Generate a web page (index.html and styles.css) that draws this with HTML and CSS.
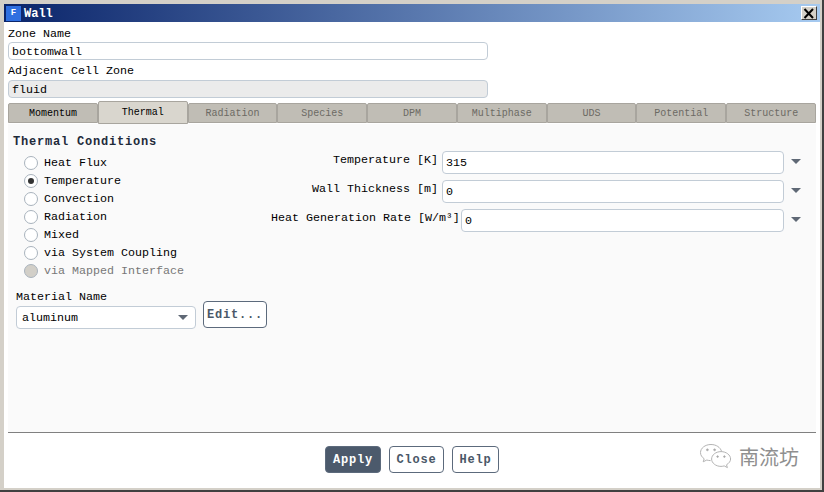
FILE: index.html
```html
<!DOCTYPE html>
<html lang="en">
  <head>
    <meta charset="UTF-8" />
    <meta name="viewport" content="width=device-width, initial-scale=1.0" />
    <title>Wall</title>
    <link rel="stylesheet" href="styles.css">
  </head>

  <body>
    <div class="window">
      <div class="window-inner">
        <div class="titlebar">
          <span class="app-icon">F</span>
          <span class="title-text">Wall</span>
          <button class="close-x">
            <svg width="12" height="11" viewBox="0 0 12 11">
              <path d="M1.5 1 L10 10 M10 1 L1.5 10" stroke="#000" stroke-width="2" fill="none" />
            </svg>
          </button>
        </div>

        <div class="zone-section">
          <label class="zone-label">Zone Name</label>
          <div class="text-box">bottomwall</div>
          <label class="zone-label adjacent">Adjacent Cell Zone</label>
          <div class="text-box readonly">fluid</div>
        </div>

        <div class="tabs">
          <div class="tab">Momentum</div>
          <div class="tab active">Thermal</div>
          <div class="tab disabled">Radiation</div>
          <div class="tab disabled">Species</div>
          <div class="tab disabled">DPM</div>
          <div class="tab disabled">Multiphase</div>
          <div class="tab disabled">UDS</div>
          <div class="tab disabled">Potential</div>
          <div class="tab disabled">Structure</div>
        </div>

        <div class="panel">
          <h2 class="panel-title">Thermal Conditions</h2>
          <div class="panel-columns">
            <div class="left-col">
              <div class="radio-list">
                <div class="radio-row"><span class="radio"></span>Heat Flux</div>
                <div class="radio-row"><span class="radio checked"></span>Temperature</div>
                <div class="radio-row"><span class="radio"></span>Convection</div>
                <div class="radio-row"><span class="radio"></span>Radiation</div>
                <div class="radio-row"><span class="radio"></span>Mixed</div>
                <div class="radio-row"><span class="radio"></span>via System Coupling</div>
                <div class="radio-row off"><span class="radio"></span>via Mapped Interface</div>
              </div>
              <div class="material-label">Material Name</div>
              <div class="material-row">
                <div class="combo">aluminum<span class="arrow"></span></div>
                <button class="btn edit-btn">Edit...</button>
              </div>
            </div>

            <div class="right-col">
              <div class="field-row">
                <span class="field-label">Temperature [K]</span>
                <div class="field-box">315</div>
                <span class="arrow"></span>
              </div>
              <div class="field-row">
                <span class="field-label">Wall Thickness [m]</span>
                <div class="field-box">0</div>
                <span class="arrow"></span>
              </div>
              <div class="field-row">
                <span class="field-label wide">Heat Generation Rate [W/m³]</span>
                <div class="field-box">0</div>
                <span class="arrow"></span>
              </div>
            </div>
          </div>
        </div>

        <div class="footer">
          <button class="btn primary apply-btn">Apply</button>
          <button class="btn close-btn">Close</button>
          <button class="btn help-btn">Help</button>
          <div class="watermark">
            <svg width="34" height="26" viewBox="0 0 34 26" fill="none" stroke="#b4b4b4" stroke-width="1">
              <path d="M12 1.5 C6 1.5 1.5 5.2 1.5 9.6 C1.5 12.2 3 14.2 5.2 15.8 L4.2 18.8 L7.8 17 C9 17.4 10.2 17.6 11.6 17.6" />
              <path d="M22.6 8.4 C21.4 4.4 17.2 1.5 12 1.5" />
              <path d="M22 8.6 C16.8 8.6 12.6 12 12.6 16 C12.6 20 16.8 23.4 22 23.4 C23.2 23.4 24.2 23.2 25.2 22.9 L28.4 24.6 L27.5 21.8 C30 20.2 31.6 18.3 31.6 16 C31.6 12 27.2 8.6 22 8.6 Z" />
              <circle cx="8.4" cy="6.8" r="0.9" fill="#999" />
              <circle cx="15.6" cy="6.8" r="0.9" fill="#999" />
              <circle cx="18.6" cy="13.6" r="0.8" fill="#999" />
              <circle cx="25.4" cy="13.6" r="0.8" fill="#999" />
            </svg>
            <span class="watermark-text">南流坊</span>
          </div>
        </div>
      </div>
    </div>
  </body>
</html>
```

FILE: styles.css
```css
* {
  box-sizing: border-box;
}

html,
body {
  margin: 0;
  padding: 0;
}

body {
  width: 824px;
  height: 492px;
  overflow: hidden;
  font-family: "Liberation Mono", "DejaVu Sans Mono", monospace;
  font-size: 11.67px;
  color: #000;
}

.window {
  width: 824px;
  height: 492px;
  background: #d4d0c8;
  border-right: 2px solid #404040;
  border-bottom: 2px solid #404040;
  padding: 4px 2px 2px 4px;
}

.window-inner {
  height: 100%;
  display: flex;
  flex-direction: column;
  background: #fff;
}

.titlebar {
  height: 18px;
  flex: none;
  display: flex;
  align-items: center;
  padding: 0 3px 0 2px;
  background: linear-gradient(to right, #0a246a, #a6caf0);
}

.app-icon {
  width: 15px;
  height: 15px;
  margin-right: 3px;
  background: #2f6fe0;
  color: #fff;
  font-size: 9px;
  font-weight: bold;
  line-height: 15px;
  text-align: center;
}

.title-text {
  flex: 1;
  padding-top: 2px;
  color: #fff;
  font-weight: bold;
  font-size: 12px;
}

.close-x {
  width: 16px;
  height: 14px;
  padding: 0;
  display: flex;
  align-items: center;
  justify-content: center;
  background: #d4d0c8;
  border: 1px solid;
  border-color: #fff #404040 #404040 #fff;
}

.zone-section {
  flex: none;
  padding: 5px 4px 0;
  width: 488px;
}

.zone-label {
  display: block;
  height: 15px;
  line-height: 14px;
}

.zone-label.adjacent {
  margin-top: 4px;
  height: 16px;
  line-height: 14px;
}

.text-box {
  height: 18px;
  line-height: 18px;
  padding-left: 3px;
  background: #fff;
  border: 1px solid #c2ccd6;
  border-radius: 4px;
}

.text-box.readonly {
  background: #ebebeb;
}

.tabs {
  flex: none;
  height: 24px;
  margin: 2px 4px 0;
  display: flex;
  align-items: flex-end;
}

.tab {
  width: 90px;
  height: 20px;
  margin-bottom: 1px;
  background: #c0bdb5;
  border: 1px solid #a8a59e;
  border-radius: 2px 2px 0 0;
  font-size: 10px;
  line-height: 20px;
  text-align: center;
}

.tab.active {
  height: 23px;
  margin-bottom: 0;
  background: #d9d6ce;
  line-height: 22px;
}

.tab.disabled {
  color: #6c6a64;
}

.panel {
  flex: 1;
  margin: 0 4px;
  padding: 11px 5px 0;
  background: #fafafa;
  border-bottom: 1px solid #808080;
}

.panel-title {
  margin: 0;
  font-size: 12px;
  font-weight: bold;
  letter-spacing: 0.8px;
  line-height: 14px;
  color: #1e2a3a;
}

.panel-columns {
  display: flex;
}

.left-col {
  width: 258px;
  flex: none;
}

.radio-list {
  padding: 5px 0 0 11px;
}

.radio-row {
  height: 18px;
  display: flex;
  align-items: center;
  gap: 6px;
}

.radio {
  width: 14px;
  height: 14px;
  display: flex;
  align-items: center;
  justify-content: center;
  background: #fff;
  border: 1px solid #a9b3bd;
  border-radius: 50%;
}

.radio.checked::after {
  content: "";
  width: 6px;
  height: 6px;
  background: #333;
  border-radius: 50%;
}

.radio-row.off {
  color: #777;
}

.radio-row.off .radio {
  background: #d2cfc8;
}

.material-label {
  margin: 10px 0 0 3px;
  height: 11px;
  line-height: 15px;
}

.material-row {
  display: flex;
  align-items: flex-end;
  gap: 7px;
  margin-left: 3px;
}

.combo {
  width: 180px;
  height: 23px;
  display: flex;
  align-items: center;
  justify-content: space-between;
  padding: 0 7px 0 5px;
  background: #fff;
  border: 1px solid #c2ccd6;
  border-radius: 4px;
}

.arrow {
  width: 0;
  height: 0;
  flex: none;
  border-left: 5px solid transparent;
  border-right: 5px solid transparent;
  border-top: 5px solid #5f6875;
}

.btn {
  height: 27px;
  padding: 0;
  background: #fff;
  border: 1px solid #5c6a7c;
  border-radius: 4px;
  font-family: inherit;
  font-size: 12px;
  font-weight: bold;
  letter-spacing: 0.8px;
  color: #4a5868;
}

.edit-btn {
  width: 64px;
  margin-bottom: 1px;
}

.right-col {
  flex: 1;
  margin-top: 2px;
}

.field-row {
  height: 23px;
  margin-bottom: 6px;
  display: flex;
  align-items: center;
}

.field-label {
  width: 167px;
  flex: none;
  padding-bottom: 6px;
  margin-right: 4px;
  text-align: right;
}

.field-label.wide {
  margin-right: 3px;
  width: 187px;
  white-space: nowrap;
}

.field-box {
  flex: 1;
  height: 23px;
  line-height: 23px;
  padding-left: 3px;
  background: #fff;
  border: 1px solid #c2ccd6;
  border-radius: 4px;
}

.field-row .arrow {
  margin: 0 10px 2px 7px;
}

.footer {
  flex: none;
  height: 55px;
  padding: 13px 4px 0 321px;
  display: flex;
  align-items: flex-start;
  gap: 8px;
}

.apply-btn {
  width: 56px;
}

.close-btn {
  width: 55px;
}

.help-btn {
  width: 47px;
}

.btn.primary {
  background: #4c5a6c;
  color: #fff;
}

.watermark {
  margin: -2px 17px 0 auto;
  display: flex;
  align-items: center;
  gap: 6px;
  height: 24px;
}

.watermark-text {
  font-family: "Noto Sans CJK SC", sans-serif;
  font-size: 20px;
  color: #8f8f8f;
}
```
